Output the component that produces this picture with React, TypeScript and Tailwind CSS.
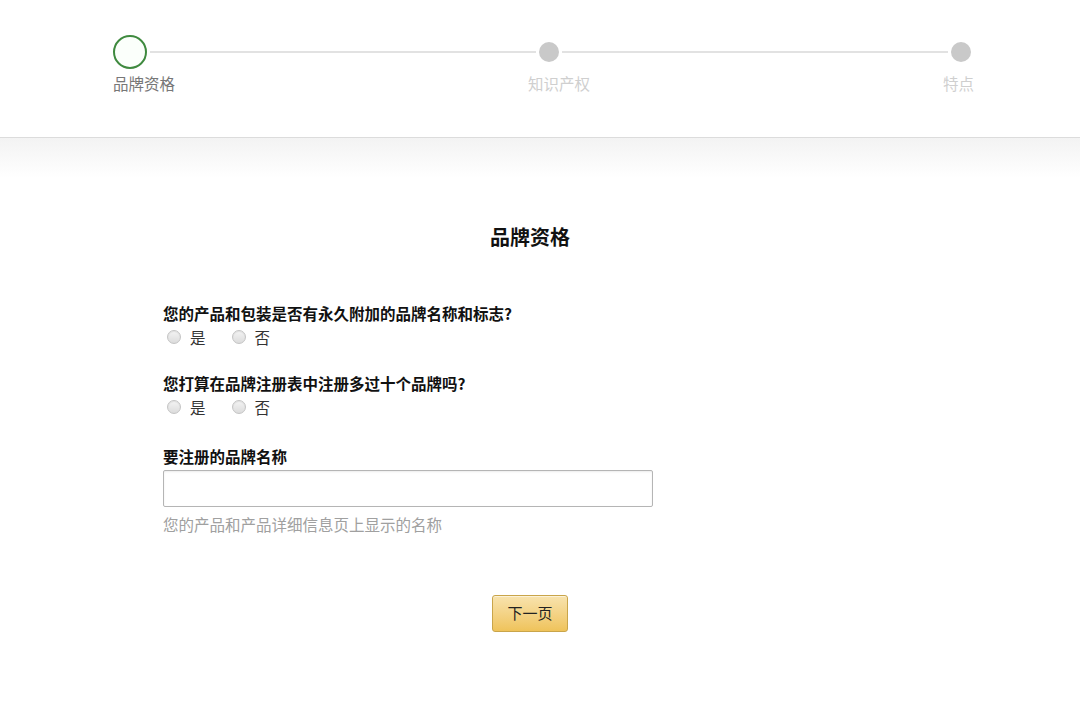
import React from 'react';

function Radio({ label }: { label: string }) {
  return (
    <label className="flex items-center gap-[9px] mr-[26px]">
      <span className="w-[14px] h-[14px] rounded-full border border-[#c4c4c4] bg-gradient-to-b from-[#f4f4f4] to-[#dcdcdc] shadow-[inset_0_1px_1px_rgba(0,0,0,0.08)]" />
      <span className="text-[15.5px] text-[#333] leading-[20px]">{label}</span>
    </label>
  );
}

function Question({ text, last }: { text: string; last?: boolean }) {
  return (
    <div className={last ? 'mb-[28px]' : 'mb-[25px]'}>
      <div className="text-[15.5px] font-bold text-[#111] leading-[22px]">{text}</div>
      <div className="flex items-center mt-[3px] pl-[4px]">
        <Radio label="是" />
        <Radio label="否" />
      </div>
    </div>
  );
}

export default function App() {
  return (
    <div
      className="w-[1080px] h-[707px] bg-white overflow-hidden"
      style={{ fontFamily: '"Noto Sans CJK SC", "Noto Sans", sans-serif' }}
    >
      {/* Stepper header */}
      <div className="h-[138px] border-b border-[#dcdcdc] pt-[35px]">
        <div className="flex items-center ml-[113px] w-[858px]">
          <div className="w-[34px] h-[34px] rounded-full border-2 border-[#3f8a3f] bg-[#fbfffb] shrink-0" />
          <div className="flex-1 h-[2px] bg-[#e2e2e2] mx-[3px]" />
          <div className="w-[20px] h-[20px] rounded-full bg-[#c9c9c9] shrink-0" />
          <div className="flex-1 h-[2px] bg-[#e2e2e2] mx-[3px]" />
          <div className="w-[20px] h-[20px] rounded-full bg-[#c9c9c9] shrink-0" />
        </div>
        <div className="flex ml-[113px] mt-[4px] text-[15.5px] leading-[20px]">
          <div className="w-[415px] text-[#777]">品牌资格</div>
          <div className="w-[415px] text-[#cfcfcf]">知识产权</div>
          <div className="text-[#cfcfcf]">特点</div>
        </div>
      </div>
      <div className="h-[40px] bg-gradient-to-b from-[#f3f3f3] to-white" />

      {/* Form */}
      <div className="ml-[163px] w-[734px] pt-[45px]">
        <h2 className="text-center text-[20px] font-bold text-[#111] leading-[28px] mb-[51px]">品牌资格</h2>

        <Question text="您的产品和包装是否有永久附加的品牌名称和标志?" />
        <Question text="您打算在品牌注册表中注册多过十个品牌吗?" last />

        <div className="text-[15.5px] font-bold text-[#111] leading-[22px]">要注册的品牌名称</div>
        <input
          type="text"
          className="block mt-[3px] w-[490px] h-[37px] border border-[#b5b5b5] rounded-[2px] bg-white shadow-[inset_0_1px_2px_rgba(0,0,0,0.08)] px-2 outline-none"
        />
        <div className="mt-[7px] text-[15.5px] text-[#a0a0a0] leading-[20px]">您的产品和产品详细信息页上显示的名称</div>

        <div className="flex justify-center mt-[61px]">
          <button className="w-[76px] h-[37px] rounded-[3px] border border-[#c9a54a] bg-gradient-to-b from-[#f8e3ad] to-[#efc35a] text-[15px] text-[#222] shadow-[0_1px_0_rgba(255,255,255,0.5)_inset]">
            下一页
          </button>
        </div>
      </div>
    </div>
  );
}
